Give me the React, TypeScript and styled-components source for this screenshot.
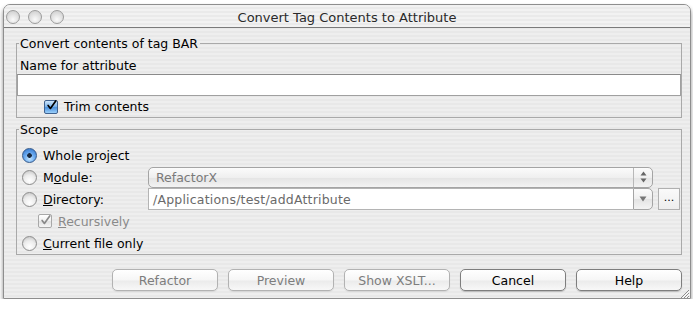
import styled, { createGlobalStyle } from "styled-components";

const GlobalStyle = createGlobalStyle`
  html, body {
    margin: 0;
    padding: 0;
    background: #ffffff;
  }
  body {
    font-family: "DejaVu Sans", "Lucida Grande", sans-serif;
    font-size: 12.5px;
    color: #000000;
  }
`;

const BUTTONS = [
  { label: "Refactor", disabled: true },
  { label: "Preview", disabled: true },
  { label: "Show XSLT...", disabled: true },
  { label: "Cancel", disabled: false },
  { label: "Help", disabled: false },
];

const CheckMark = ({ color }: { color: string }) => (
  <svg width="13" height="13" viewBox="0 0 13 13">
    <path d="M2.5 6.5 L5.2 10 L11.5 1.2" fill="none" stroke={color} strokeWidth="2" strokeLinecap="round" strokeLinejoin="round" />
  </svg>
);

const App = () => {
  return (
    <>
      <GlobalStyle />
      <Win.Window>
        <Win.TitleBar>
          <Win.Lights>
            <Win.Light />
            <Win.Light />
            <Win.Light />
          </Win.Lights>
          <Win.Title>Convert Tag Contents to Attribute</Win.Title>
          <div />
        </Win.TitleBar>

        <Win.Body>
          <Win.Group>
            <Win.Legend>Convert contents of tag BAR</Win.Legend>
            <Win.FieldLabel>Name for attribute</Win.FieldLabel>
            <Win.TextField />
            <Win.CheckRow $indent={27}>
              <Win.CheckBox $checked>
                <CheckMark color="#000" />
              </Win.CheckBox>
              <span>Trim contents</span>
            </Win.CheckRow>
          </Win.Group>

          <Win.Group>
            <Win.Legend>Scope</Win.Legend>
            <Win.ScopeGrid>
              <Win.RadioRow $span>
                <Win.Radio $selected />
                <span>
                  Whole <u>p</u>roject
                </span>
              </Win.RadioRow>

              <Win.RadioRow>
                <Win.Radio />
                <span>
                  M<u>o</u>dule:
                </span>
              </Win.RadioRow>
              <Win.Combo>
                <Win.ComboText>RefactorX</Win.ComboText>
                <Win.Stepper>
                  <svg width="7" height="14" viewBox="0 0 7 14">
                    <path d="M0.5 5.5 L3.5 1.5 L6.5 5.5 Z" fill="#666" />
                    <path d="M0.5 8.5 L3.5 12.5 L6.5 8.5 Z" fill="#666" />
                  </svg>
                </Win.Stepper>
              </Win.Combo>
              <div />

              <Win.RadioRow>
                <Win.Radio />
                <span>
                  <u>D</u>irectory:
                </span>
              </Win.RadioRow>
              <Win.PathField>
                <Win.PathText>/Applications/test/addAttribute</Win.PathText>
                <Win.DropButton>
                  <svg width="8" height="6" viewBox="0 0 8 6">
                    <path d="M0.5 0.5 L7.5 0.5 L4 5.5 Z" fill="#777" />
                  </svg>
                </Win.DropButton>
              </Win.PathField>
              <Win.BrowseButton>...</Win.BrowseButton>

              <Win.CheckRow $indent={21} $disabled $span>
                <Win.CheckBox>
                  <CheckMark color="#8a8a8a" />
                </Win.CheckBox>
                <span>
                  <u>R</u>ecursively
                </span>
              </Win.CheckRow>

              <Win.RadioRow $span>
                <Win.Radio />
                <span>
                  <u>C</u>urrent file only
                </span>
              </Win.RadioRow>
            </Win.ScopeGrid>
          </Win.Group>

          <Win.ButtonBar>
            {BUTTONS.map((button) => (
              <Win.PushButton key={`btn-${button.label}`} $disabled={button.disabled}>
                {button.label}
              </Win.PushButton>
            ))}
          </Win.ButtonBar>
        </Win.Body>

        <Win.Grip>
          <svg width="11" height="11" viewBox="0 0 11 11">
            <path d="M10 2 L2 10 M10 5 L5 10 M10 8 L8 10" stroke="#8a8a8a" strokeWidth="1" />
            <path d="M10.5 3 L3 10.5 M10.5 6 L6 10.5 M10.5 9 L9 10.5" stroke="#ffffff" strokeWidth="1" />
          </svg>
        </Win.Grip>
      </Win.Window>
    </>
  );
};

export default App;

const pinstripe = "repeating-linear-gradient(to bottom, #eeeeee 0px, #eeeeee 2px, #e8e8e8 2px, #e8e8e8 4px)";

const Win = {
  Window: styled.div`
    position: relative;
    box-sizing: border-box;
    width: 688px;
    height: 295px;
    margin: 4px 0 0 3px;
    border: 1px solid #8e8e8e;
    border-radius: 7px 7px 0 0;
    background: ${pinstripe};
    box-shadow: 0 3px 4px rgba(0, 0, 0, 0.45);
    display: flex;
    flex-direction: column;
    overflow: hidden;
  `,

  TitleBar: styled.div`
    height: 22px;
    padding: 0 2px;
    display: grid;
    grid-template-columns: 1fr auto 1fr;
    align-items: center;
    border-bottom: 1px solid #7a7a7a;
    background: repeating-linear-gradient(to bottom, #f2f2f2 0px, #f2f2f2 2px, #eaeaea 2px, #eaeaea 4px);
  `,

  Lights: styled.div`
    display: flex;
    gap: 8px;
    padding-top: 2px;
  `,

  Light: styled.div`
    box-sizing: border-box;
    width: 14px;
    height: 14px;
    border-radius: 50%;
    border: 1px solid #9c9c9c;
    background: radial-gradient(circle at 50% 70%, #fafafa 0%, #e4e4e4 45%, #c8c8c8 100%);
  `,

  Title: styled.div`
    font-size: 13px;
    color: #2a2a2a;
    padding-top: 2px;
  `,

  Body: styled.div`
    padding: 8px 8px 0 12px;
    display: flex;
    flex-direction: column;
    gap: 4px;
  `,

  Group: styled.fieldset`
    margin: 0;
    padding: 7px 0 0 0;
    border: 1px solid #a9a9a9;
    min-width: 0;
  `,

  Legend: styled.legend`
    margin-left: 2px;
    padding: 0 2px 0 1px;
    line-height: 15px;
  `,

  FieldLabel: styled.div`
    padding-left: 3px;
    line-height: 16px;
  `,

  TextField: styled.div`
    box-sizing: border-box;
    height: 22px;
    background: #ffffff;
    border: 1px solid #a0a0a0;
    border-top-color: #8a8a8a;
  `,

  CheckRow: styled.div<{ $indent: number; $disabled?: boolean; $span?: boolean }>`
    height: 21px;
    display: flex;
    align-items: center;
    gap: 6px;
    padding-left: ${(p) => p.$indent}px;
    color: ${(p) => (p.$disabled ? "#8a8a8a" : "#000000")};
    grid-column: ${(p) => (p.$span ? "1 / -1" : "auto")};
  `,

  CheckBox: styled.div<{ $checked?: boolean }>`
    box-sizing: border-box;
    width: 14px;
    height: 14px;
    border-radius: 2px;
    border: 1px solid ${(p) => (p.$checked ? "#40628f" : "#a8a8a8")};
    background: ${(p) =>
      p.$checked
        ? "linear-gradient(#cfe6fb 0%, #7fb6ec 45%, #4d92de 55%, #9cd0fa 100%)"
        : "linear-gradient(#ffffff 0%, #f0f0f0 50%, #e2e2e2 55%, #f6f6f6 100%)"};
    display: flex;
    align-items: center;
    justify-content: center;

    svg {
      margin-top: -2px;
      margin-left: 1px;
    }
  `,

  ScopeGrid: styled.div`
    display: grid;
    grid-template-columns: 126px 505px 22px;
    grid-auto-rows: 22px;
    column-gap: 5px;
    align-items: center;
  `,

  RadioRow: styled.div<{ $span?: boolean }>`
    display: flex;
    align-items: center;
    gap: 6px;
    padding-left: 5px;
    grid-column: ${(p) => (p.$span ? "1 / -1" : "auto")};
  `,

  Radio: styled.div<{ $selected?: boolean }>`
    box-sizing: border-box;
    width: 15px;
    height: 15px;
    border-radius: 50%;
    border: 1px solid ${(p) => (p.$selected ? "#35598a" : "#8c8c8c")};
    background: ${(p) =>
      p.$selected
        ? "radial-gradient(circle at 50% 50%, #1a2a40 0px, #1a2a40 2px, transparent 2.6px), radial-gradient(circle at 50% 75%, #c4e6ff 0%, #6aaaf0 45%, #2c6fc7 100%)"
        : "radial-gradient(circle at 50% 75%, #ffffff 0%, #ececec 50%, #bdbdbd 100%)"};
  `,

  Combo: styled.div`
    box-sizing: border-box;
    height: 21px;
    display: flex;
    align-items: stretch;
    border: 1px solid #a4a4a4;
    border-radius: 5px;
    background: linear-gradient(#fbfbfb 0%, #efefef 50%, #e4e4e4 52%, #f3f3f3 100%);
    color: #7a7a7a;
  `,

  ComboText: styled.div`
    flex: 1;
    display: flex;
    align-items: center;
    padding-left: 7px;
  `,

  Stepper: styled.div`
    width: 18px;
    border-left: 1px solid #b8b8b8;
    display: flex;
    align-items: center;
    justify-content: center;
  `,

  PathField: styled.div`
    box-sizing: border-box;
    height: 22px;
    display: flex;
    align-items: stretch;
  `,

  PathText: styled.div`
    flex: 1;
    display: flex;
    align-items: center;
    padding-left: 4px;
    background: #ffffff;
    border: 1px solid #b4b4b4;
    border-right: none;
    color: #6a6a6a;
    letter-spacing: 0.2px;
  `,

  DropButton: styled.div`
    width: 18px;
    display: flex;
    align-items: center;
    justify-content: center;
    border: 1px solid #a4a4a4;
    border-radius: 0 5px 5px 0;
    background: linear-gradient(#fbfbfb 0%, #efefef 50%, #e4e4e4 52%, #f3f3f3 100%);
  `,

  BrowseButton: styled.div`
    box-sizing: border-box;
    width: 22px;
    height: 22px;
    border: 1px solid #b0b0b0;
    background: linear-gradient(#fafafa, #eeeeee);
    display: flex;
    align-items: center;
    justify-content: center;
    font-size: 11px;
    padding-bottom: 4px;
  `,

  ButtonBar: styled.div`
    margin-top: 10px;
    display: flex;
    justify-content: flex-end;
    gap: 10px;
  `,

  PushButton: styled.div<{ $disabled?: boolean }>`
    box-sizing: border-box;
    width: 106px;
    height: 22px;
    display: flex;
    align-items: center;
    justify-content: center;
    border-radius: 5px;
    border: 1px solid ${(p) => (p.$disabled ? "#b2b2b2" : "#7e7e7e")};
    background: linear-gradient(#ffffff 0%, #f6f6f6 50%, #ebebeb 55%, #f8f8f8 100%);
    box-shadow: 0 1px 1px rgba(0, 0, 0, ${(p) => (p.$disabled ? 0.08 : 0.2)});
    color: ${(p) => (p.$disabled ? "#7d7d7d" : "#000000")};
  `,

  Grip: styled.div`
    position: absolute;
    right: 0;
    bottom: 0;
    width: 11px;
    height: 11px;
  `,
};
